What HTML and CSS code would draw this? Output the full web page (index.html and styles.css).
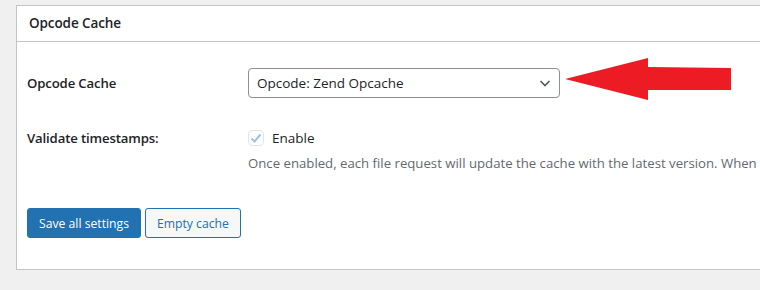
FILE: index.html
```html
<!DOCTYPE html>
<html lang="en">
<head>
    <meta charset="UTF-8" />
    <title>Opcode Cache</title>
    <link rel="stylesheet" href="styles.css">
</head>
<body>
    <div class="postbox">
        <h2 class="postbox-title">Opcode Cache</h2>

        <div class="postbox-inside">
            <div class="form-row row-select">
                <div class="row-label">Opcode Cache</div>
                <div class="row-field">
                    <div class="select-box">
                        <span>Opcode: Zend Opcache</span>
                        <svg class="chevron" width="16" height="16" viewBox="0 0 16 16">
                            <path d="M3.5 6 L8 10.5 L12.5 6" fill="none" stroke="#50575e" stroke-width="1.6"/>
                        </svg>
                    </div>
                    <!-- annotation arrow pointing at the select -->
                    <svg class="arrow" width="170" height="44" viewBox="0 0 170 44">
                        <polygon points="1,21 84,0 84,9 167,10 167,32 84,32 84,42" fill="#ed1c24"/>
                    </svg>
                </div>
            </div>

            <div class="form-row row-check">
                <div class="row-label">Validate timestamps:</div>
                <div class="row-field">
                    <label class="check-line">
                        <span class="checkbox">
                            <svg width="14" height="14" viewBox="0 0 14 14">
                                <path d="M2.5 7.5 L5.5 10.5 L11.5 3.5" fill="none" stroke="#9ec2e6" stroke-width="2"/>
                            </svg>
                        </span>
                        Enable
                    </label>
                    <p class="description">Once enabled, each file request will update the cache with the latest version. When</p>
                </div>
            </div>

            <div class="actions">
                <a class="button button-primary">Save all settings</a>
                <a class="button">Empty cache</a>
            </div>
        </div>
    </div>
</body>
</html>
```

FILE: styles.css
```css
* {
    margin: 0;
    padding: 0;
    box-sizing: border-box;
}

body {
    font-family: "Open Sans", "Noto Sans", sans-serif;
    font-size: 13.5px;
    color: #1d2327;
    background-color: #f0f0f1;
    padding: 5px 0 0 16px;
    overflow: hidden;
}

.postbox {
    width: 900px;
    background-color: #fff;
    border: 1px solid #c3c4c7;
}

.postbox-title {
    height: 36px;
    line-height: 35px;
    padding: 0 12px;
    font-size: 13.5px;
    font-weight: 600;
    letter-spacing: -0.1px;
    border-bottom: 1px solid #c3c4c7;
}

.postbox-inside {
    padding: 26px 0 31px 10px;
}

.form-row {
    display: grid;
    grid-template-columns: 221px 1fr;
}

.row-label {
    font-size: 13.2px;
    font-weight: 600;
    letter-spacing: -0.15px;
}

.row-select {
    align-items: center;
}

.row-select .row-field {
    display: flex;
    align-items: center;
    gap: 4px;
}

.select-box {
    width: 312px;
    height: 30px;
    border: 1px solid #8c8f94;
    border-radius: 4px;
    display: flex;
    align-items: center;
    justify-content: space-between;
    padding: 0 6px 0 8px;
}

.chevron {
    display: block;
}

.arrow {
    display: block;
    margin: -10px 0 -4px;
}

.row-check {
    margin-top: 31px;
    line-height: 18px;
}

.check-line {
    display: flex;
    align-items: center;
    gap: 8px;
    height: 18px;
}

.checkbox {
    width: 16px;
    height: 16px;
    border: 1px solid #e2e4e7;
    border-radius: 4px;
    background-color: #fff;
    display: flex;
    align-items: center;
    justify-content: center;
}

.description {
    margin-top: 6px;
    font-size: 13.2px;
    line-height: 20px;
    color: #646970;
    white-space: nowrap;
}

.actions {
    margin-top: 35px;
    display: flex;
    gap: 4px;
}

.button {
    display: inline-flex;
    align-items: center;
    height: 30px;
    padding: 0 11px;
    border: 1px solid #2271b1;
    border-radius: 3px;
    background-color: #f6f7f7;
    color: #2271b1;
    font-size: 12.2px;
    text-decoration: none;
}

.button-primary {
    background-color: #2271b1;
    color: #fff;
}
```
